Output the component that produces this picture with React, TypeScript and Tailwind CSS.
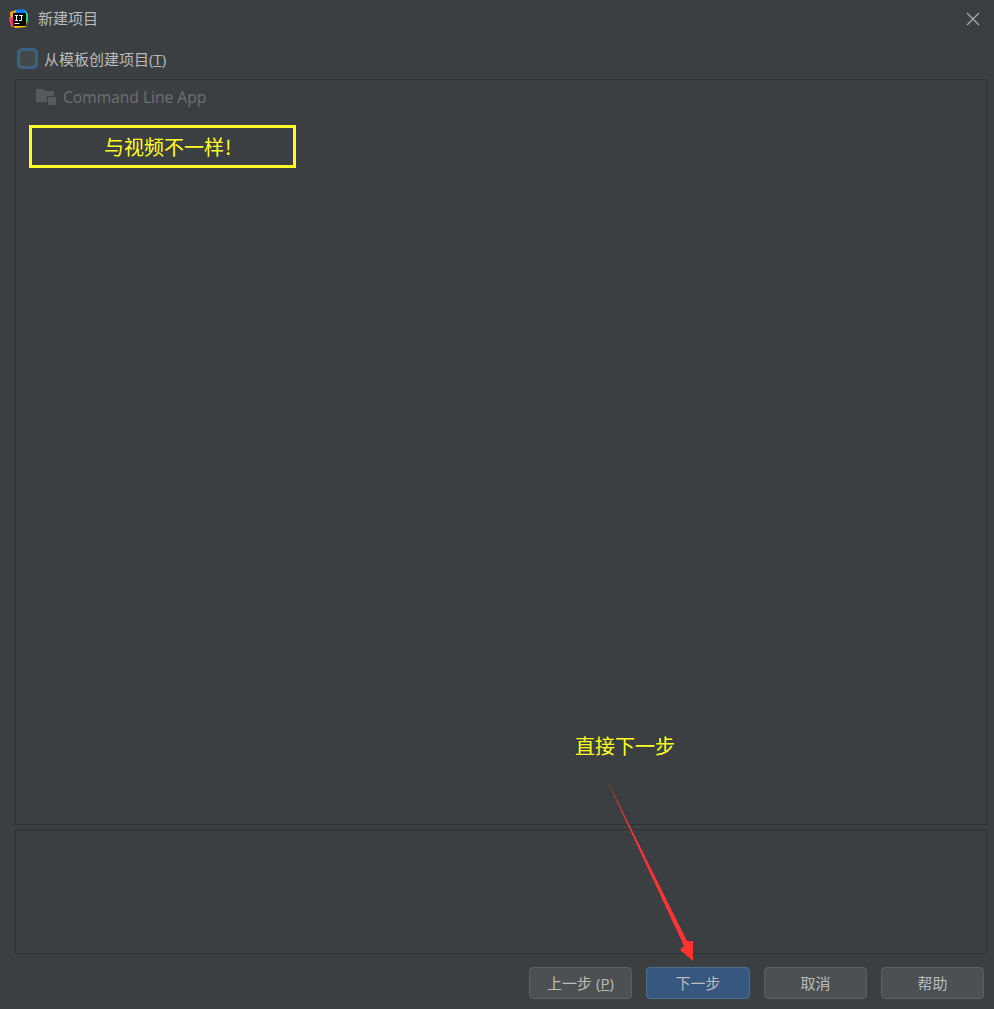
const uiFont = "font-['Open_Sans','Noto_Sans_CJK_SC',sans-serif]";

const IdeaLogo = () => (
	<svg width="20" height="20" viewBox="0 0 20 20" className="shrink-0">
		<path d="M1 4 L9 1 L6 9 L2 11 Z" fill="#fc9d1d" />
		<path d="M0 8 L5 10 L5 18 L2 18 Z" fill="#fe4a8d" />
		<path d="M6 1 L15 0 L19 5 L18 12 L8 10 Z" fill="#087cfa" />
		<path d="M1 3 L7 1 L5 7 L2 9 Z" fill="#fca11d" />
		<path d="M15 15 L18 12 L17 18 L6 19 L4 17 Z" fill="#f9c80e" />
		<path d="M2 10 L6 6 L6 17 L3 18 Z" fill="#fe2857" />
		<path d="M16 1 L19 5 L19 13 L17 13 Z" fill="#21d789" />
		<rect x="4" y="4" width="13" height="13" fill="#000000" />
		<rect x="5.5" y="14" width="5" height="1" fill="#ffffff" />
		<path d="M6 6 H9 V7 H8 V11 H9 V12 H6 V11 H7 V7 H6 Z" fill="#ffffff" />
		<path d="M10 6 H14 V7 H13 V11 Q13 12 12 12 H10 V11 H12 V7 H10 Z" fill="#ffffff" />
	</svg>
);

const FolderIcon = () => (
	<svg width="20" height="18" viewBox="0 0 20 18" className="shrink-0">
		<path d="M0 1 H7 L9 3 H18 V8 H11 V14 H0 Z" fill="#575a5c" />
		<rect x="12" y="9" width="8" height="8" fill="#575a5c" />
	</svg>
);

const FooterButton = ({
	children,
	primary,
}: {
	children: React.ReactNode;
	primary?: boolean;
}) => (
	<div
		className={
			primary
				? "w-[104px] h-[32px] flex items-center justify-center rounded-[4px] border border-[#4c708c] bg-[#365880] text-[15px] text-[#bbbbbb]"
				: "w-[103px] h-[32px] flex items-center justify-center rounded-[4px] border border-[#5e6060] bg-[#4c5052] text-[15px] text-[#bbbbbb]"
		}
	>
		{children}
	</div>
);

export default function App() {
	return (
		<div
			className={`relative w-[994px] h-[1009px] overflow-hidden bg-[#3c3f41] flex flex-col ${uiFont}`}
		>
			{/* Title bar */}
			<div className="h-[38px] shrink-0 flex items-center pl-[9px] pr-[14px]">
				<IdeaLogo />
				<span className="ml-[9px] mb-[2px] text-[15px] text-[#bbbbbb]">新建项目</span>
				<svg width="14" height="14" viewBox="0 0 14 14" className="ml-auto">
					<path d="M1 1 L13 13 M13 1 L1 13" stroke="#a9abad" strokeWidth="1.2" />
				</svg>
			</div>

			{/* Template checkbox */}
			<div className="h-[41px] shrink-0 flex items-center pl-[17px]">
				<div className="w-[21px] h-[21px] rounded-[5px] border-[3px] border-[#3d6185] bg-[#43494a]" />
				<span className="ml-[6px] mt-[2px] text-[15px] text-[#bbbbbb]">
					从模板创建项目(<span className="underline">T</span>)
				</span>
			</div>

			{/* Template list */}
			<div className="h-[746px] shrink-0 mx-[15px] mr-[7px] border border-[#323232] px-[20px] pt-[7px]">
				<div className="flex items-center h-[20px]">
					<FolderIcon />
					<span className="ml-[7px] mt-[2px] text-[15.6px] text-[#6e7071]">Command Line App</span>
				</div>
			</div>

			{/* Description */}
			<div className="h-[125px] shrink-0 mt-[4px] ml-[15px] mr-[7px] border border-[#323232]" />

			{/* Footer */}
			<div className="mt-[13px] pl-[529px] flex gap-[14px]">
				<FooterButton>
					<span>
						上一步 (<span className="underline">P</span>)
					</span>
				</FooterButton>
				<FooterButton primary>下一步</FooterButton>
				<FooterButton>取消</FooterButton>
				<FooterButton>帮助</FooterButton>
			</div>

			{/* Annotations drawn over the screenshot */}
			<div className="absolute left-[29px] top-[125px] w-[267px] h-[43px] border-[3px] border-[#ffff26] pl-[72px] flex items-center text-[20px] text-[#ffff26] font-['Noto_Sans_CJK_SC',sans-serif]">
				<span>与视频不一样</span>
				<span className="ml-[1px]">!</span>
			</div>
			<div className="absolute left-[575px] top-[732px] text-[20px] leading-[28px] text-[#ffff26] font-['Noto_Sans_CJK_SC',sans-serif]">
				直接下一步
			</div>
			<svg width="994" height="1009" className="absolute left-0 top-0 pointer-events-none">
				<path d="M605 776 L687 941 L693 941 L693 961 L680 950 L684 946 Z" fill="#ff3333" />
			</svg>
		</div>
	);
}
